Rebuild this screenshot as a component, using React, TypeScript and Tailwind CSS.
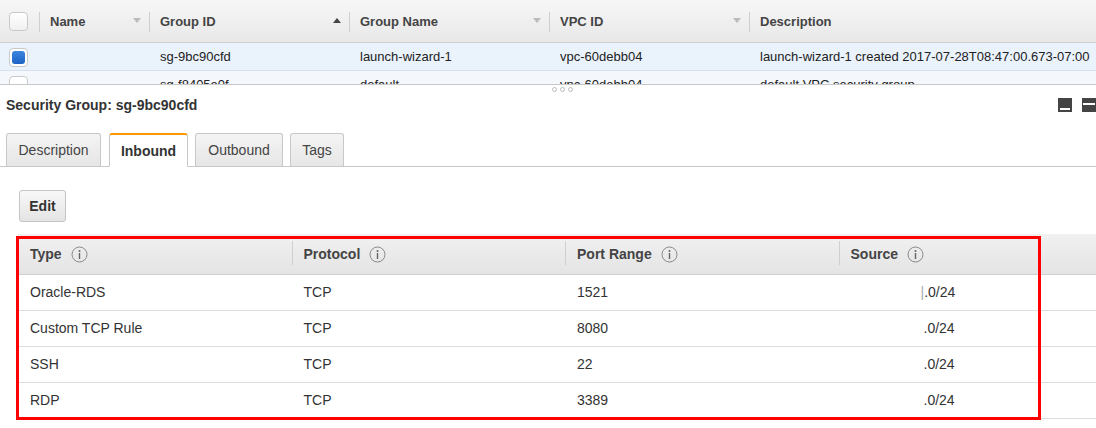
import React from "react";

const font = { fontFamily: '"Liberation Sans", Arial, sans-serif' };

function Info() {
  return (
    <svg width="17" height="17" viewBox="0 0 17 17" className="ml-[9px] shrink-0">
      <circle cx="8.5" cy="8.5" r="7.5" fill="none" stroke="#888" strokeWidth="1" />
      <circle cx="8.5" cy="5" r="1" fill="#666" />
      <rect x="7.8" y="7" width="1.4" height="6" fill="#666" />
    </svg>
  );
}

function Arrow({ up, dark }: { up?: boolean; dark?: boolean }) {
  return (
    <svg width="8" height="5" viewBox="0 0 8 5">
      {up ? (
        <polygon points="0,5 8,5 4,0" fill={dark ? "#444" : "#bbb"} />
      ) : (
        <polygon points="0,0 8,0 4,5" fill={dark ? "#444" : "#bbb"} />
      )}
    </svg>
  );
}

const topCols = [
  { label: "Name", w: "w-[110px]", arrow: <Arrow /> },
  { label: "Group ID", w: "w-[200px]", arrow: <Arrow up dark /> },
  { label: "Group Name", w: "w-[200px]", arrow: <Arrow /> },
  { label: "VPC ID", w: "w-[200px]", arrow: <Arrow /> },
  { label: "Description", w: "flex-1", arrow: null },
];

const rows1 = ["", "sg-9bc90cfd", "launch-wizard-1", "vpc-60debb04", "launch-wizard-1 created 2017-07-28T08:47:00.673-07:00"];
const rows2 = ["", "sg-f8405e0f", "default", "vpc-60debb04", "default VPC security group"];

const rules = [
  ["Oracle-RDS", "TCP", "1521"],
  ["Custom TCP Rule", "TCP", "8080"],
  ["SSH", "TCP", "22"],
  ["RDP", "TCP", "3389"],
];

const tabs = [
  { t: "Description", w: "w-[95px]" },
  { t: "Inbound", w: "w-[79px]" },
  { t: "Outbound", w: "w-[88px]" },
  { t: "Tags", w: "w-[54px]" },
];

export default function App() {
  return (
    <div className="w-[1096px] h-[428px] bg-white overflow-hidden text-[#444]" style={font}>
      {/* top list */}
      <div className="h-[85px] overflow-hidden border-b border-[#c8c8c8] relative">
        <div className="h-[43px] flex items-center pt-[1px] bg-gradient-to-b from-[#f7f7f7] to-[#e8e8e8] border-b border-[#cfcfcf]">
          <div className="w-[39px] h-full flex items-center pl-[9px] shrink-0">
            <div className="w-[19px] h-[19px] rounded-[4px] border border-[#c9c9c9] bg-gradient-to-b from-white to-[#f0f0f0]" />
          </div>
          {topCols.map((c, i) => (
            <div key={i} className={`${c.w} h-full flex items-center relative shrink-0`}>
              <div className="absolute left-0 top-[11px] h-[20px] w-px bg-[#cfcfcf]" />
              <span className="pl-[11px] text-[13px] font-bold text-[#444]">{c.label}</span>
              {c.arrow && <span className="absolute right-[8px] top-[17px] flex">{c.arrow}</span>}
            </div>
          ))}
        </div>
        <div className="h-[28px] flex items-center pt-[1px] bg-[#eaf2fc] border-b border-[#d6dfeb]">
          <div className="w-[39px] h-full flex items-center pl-[9px] shrink-0">
            <div className="w-[19px] h-[19px] rounded-[4px] border border-[#c9c9c9] bg-white flex items-center justify-center">
              <div className="w-[13px] h-[13px] rounded-[3px] bg-gradient-to-b from-[#3b86df] to-[#1d63c4]" />
            </div>
          </div>
          {rows1.map((t, i) => (
            <div key={i} className={`${topCols[i].w} shrink-0 pl-[11px] text-[13px] text-[#222] whitespace-nowrap`}>{t}</div>
          ))}
        </div>
        <div className="h-[28px] flex items-center bg-[#f4f8fd]">
          <div className="w-[39px] h-full flex items-center pl-[9px] shrink-0">
            <div className="w-[19px] h-[19px] rounded-[4px] border border-[#c9c9c9] bg-white" />
          </div>
          {rows2.map((t, i) => (
            <div key={i} className={`${topCols[i].w} shrink-0 pl-[11px] text-[13px] text-[#222] whitespace-nowrap`}>{t}</div>
          ))}
        </div>
      </div>

      {/* title bar */}
      <div className="h-[48px] flex items-start justify-between pl-[6px] relative">
        <div className="absolute left-[552px] top-[2px] flex gap-[3px]">
          <span className="w-[5px] h-[5px] rounded-full border border-[#bbb]" />
          <span className="w-[5px] h-[5px] rounded-full border border-[#bbb]" />
          <span className="w-[5px] h-[5px] rounded-full border border-[#bbb]" />
        </div>
        <div className="pt-[12px] text-[14px] font-bold text-[#333] leading-[16px]">Security Group: sg-9bc90cfd</div>
        <div className="flex gap-[10px] pt-[13px]">
          <div className="w-[14px] h-[14px] bg-[#444] flex items-end justify-center pb-[2px]">
            <div className="w-[10px] h-[2px] bg-white" />
          </div>
          <div className="w-[14px] h-[14px] bg-[#444] flex items-start justify-center pt-[5px]">
            <div className="w-[12px] h-[2px] bg-white" />
          </div>
        </div>
      </div>

      {/* tabs */}
      <div className="h-[34px] flex items-end gap-[7px] pl-[6px] border-b border-[#c8c8c8]">
        {tabs.map(({ t, w }) =>
          t === "Inbound" ? (
            <div
              key={t}
              className={`${w} ml-[1px] h-[34px] mb-[-1px] pt-[1px] flex items-center justify-center bg-white border border-[#c8c8c8] border-b-white border-t-2 border-t-[#f90] rounded-t-[3px] text-[14px] font-bold text-[#333]`}
            >
              {t}
            </div>
          ) : (
            <div
              key={t}
              className={`${w} h-[33px] pt-[1px] flex items-center justify-center bg-gradient-to-b from-[#f4f4f4] to-[#e6e6e6] border border-[#c8c8c8] border-b-0 rounded-t-[3px] text-[14px] text-[#444]`}
            >
              {t}
            </div>
          )
        )}
      </div>

      {/* edit */}
      <div className="pl-[19px] pt-[23px] pb-[12px]">
        <button className="h-[32px] w-[47px] rounded-[3px] border border-[#c4c4c4] bg-gradient-to-b from-[#f8f8f8] to-[#e4e4e4] text-[14px] font-bold text-[#333]">
          Edit
        </button>
      </div>

      {/* inbound rules */}
      <div className="ml-[18px] relative">
        <div className="h-[41px] flex items-center bg-gradient-to-b from-[#f1f1f1] to-[#e4e4e4] border-b border-[#cfcfcf]">
          {["Type", "Protocol", "Port Range", "Source"].map((h, i) => (
            <div key={h} className="w-[273.5px] shrink-0 h-full flex items-center relative">
              {i > 0 && <div className="absolute left-0 top-[7px] h-[24px] w-px bg-[#cfcfcf]" />}
              <span className="pl-[12px] text-[14px] font-bold text-[#444]">{h}</span>
              <Info />
            </div>
          ))}
        </div>
        {rules.map((r, ri) => (
          <div key={ri} className="h-[36px] flex items-center border-b border-[#ddd]">
            {r.map((c, i) => (
              <div key={i} className="w-[273.5px] shrink-0 pl-[12px] text-[14px] text-[#333]">{c}</div>
            ))}
            <div className="w-[273.5px] shrink-0 pl-[82px] text-[14px] text-[#333] whitespace-nowrap">
              {ri === 0 ? <span className="text-[#aaa]">|</span> : <span className="inline-block w-[3px]" />}
              .0/24
            </div>
          </div>
        ))}
        <div className="absolute left-[-2px] top-[2px] w-[1025px] h-[184px] border-[3px] border-[#ff0000] pointer-events-none" />
      </div>
    </div>
  );
}
